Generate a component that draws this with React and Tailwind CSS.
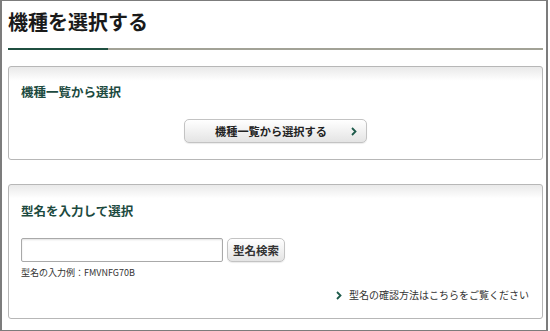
import React from 'react';

function Chevron({ className }) {
  return (
    <svg width="6" height="9" viewBox="0 0 6 9" className={className} aria-hidden="true">
      <path d="M1 1 L4.5 4.5 L1 8" fill="none" stroke="currentColor" strokeWidth="1.8" />
    </svg>
  );
}

export default function App() {
  const font = { fontFamily: '"Noto Sans CJK JP", "Noto Sans", sans-serif' };

  return (
    <div className="w-[550px] h-[331px] bg-white" style={font}>
      <div className="w-[548px] h-[331px] border-y border-x-2 border-[#7c7c7c] pl-[6px] pr-[3px] pt-[9px]">
        {/* Page title */}
        <h1 className="text-[20px] leading-[24px] font-bold text-[#1a1a1a]">機種を選択する</h1>
        <div className="flex h-[2px] mt-[14px]">
          <div className="w-[100px] bg-[#1f4f40]" />
          <div className="flex-1 bg-[#a2a296]" />
        </div>

        {/* Select from list */}
        <section className="mt-[16px] h-[94px] border border-[#b7b7b7] rounded-[3px] bg-linear-to-b from-[#e9e9e9] to-white to-15% pt-[16px] px-[12px]">
          <h2 className="text-[12.5px] leading-[18px] font-bold text-[#1c4a40]">機種一覧から選択</h2>
          <div className="flex justify-center mt-[18px]">
            <button className="relative w-[183px] h-[24px] flex items-center pl-[30px] border border-[#c3c3c3] rounded-[5px] bg-linear-to-b from-white to-[#e4e4e4] shadow-[0_1px_1px_rgba(0,0,0,0.08)]">
              <span className="text-[11.2px] leading-[14px] font-bold text-[#222]">機種一覧から選択する</span>
              <Chevron className="absolute right-[9px] top-[7px] text-[#1d5a4a]" />
            </button>
          </div>
        </section>

        {/* Input model name */}
        <section className="mt-[24px] h-[135px] border border-[#b7b7b7] rounded-[3px] bg-linear-to-b from-[#e9e9e9] to-white to-10% pt-[17px] px-[12px]">
          <h2 className="text-[12.5px] leading-[18px] font-bold text-[#1c4a40]">型名を入力して選択</h2>
          <div className="flex items-center mt-[18px]">
            <input
              type="text"
              className="w-[202px] h-[24px] border border-[#a9a9a9] rounded-[2px] bg-white shadow-[inset_0_1px_2px_rgba(0,0,0,0.12)] outline-none"
            />
            <button className="ml-[4px] w-[58px] h-[24px] border border-[#c3c3c3] rounded-[5px] bg-linear-to-b from-white to-[#e4e4e4] text-[11.5px] leading-[14px] font-bold text-[#333] shadow-[0_1px_1px_rgba(0,0,0,0.08)]">
              型名検索
            </button>
          </div>
          <p className="mt-[5px] text-[9px] leading-[12px] text-[#333]">型名の入力例：FMVNFG70B</p>
          <div className="mt-[9px] flex justify-end items-center pr-[1px]">
            <Chevron className="text-[#1d5a4a] mr-[7px]" />
            <span className="text-[10px] leading-[14px] text-[#333]">型名の確認方法はこちらをご覧ください</span>
          </div>
        </section>
      </div>
    </div>
  );
}
